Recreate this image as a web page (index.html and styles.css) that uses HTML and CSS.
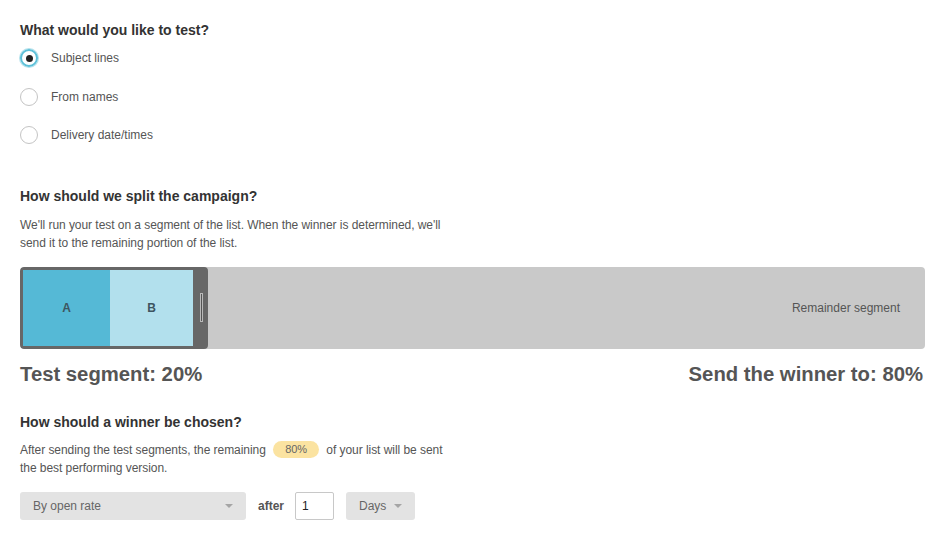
FILE: index.html
```html
<!DOCTYPE html>
<html lang="en">
<head>
<meta charset="UTF-8">
<meta name="viewport" content="width=device-width, initial-scale=1.0">
<title>A/B Test Settings</title>
<link rel="stylesheet" href="styles.css">
</head>
<body>
<div class="settings">
  <h3 class="title">What would you like to test?</h3>
  <div class="options">
    <label class="option"><span class="radio checked"></span>Subject lines</label>
    <label class="option"><span class="radio"></span>From names</label>
    <label class="option"><span class="radio"></span>Delivery date/times</label>
  </div>

  <h3 class="title split-title">How should we split the campaign?</h3>
  <p class="note">We'll run your test on a segment of the list. When the winner is determined, we'll send it to the remaining portion of the list.</p>

  <div class="split-bar">
    <div class="test-segment">
      <div class="seg seg-a">A</div>
      <div class="seg seg-b">B</div>
      <div class="handle"><span class="grip"></span></div>
    </div>
    <div class="remainder">Remainder segment</div>
  </div>

  <div class="summary">
    <span>Test segment: 20%</span>
    <span>Send the winner to: 80%</span>
  </div>

  <h3 class="title winner-title">How should a winner be chosen?</h3>
  <p class="note">After sending the test segments, the remaining <span class="pill">80%</span> of your list will be sent<br>the best performing version.</p>

  <div class="controls">
    <div class="select select-wide">By open rate<span class="caret"></span></div>
    <span class="after">after</span>
    <input class="num" type="text" value="1">
    <div class="select select-small">Days<span class="caret"></span></div>
  </div>
</div>
</body>
</html>
```
FILE: styles.css
```css
body {
  margin: 0;
  font-family: "Liberation Sans", Arial, sans-serif;
  color: #555;
  background: #fff;
}

.settings {
  padding: 21px 15px 0 20px;
}

.title {
  margin: 0;
  font-size: 14px;
  line-height: 18px;
  font-weight: bold;
  color: #333;
}

.options {
  display: flex;
  flex-direction: column;
}

.option {
  display: flex;
  align-items: center;
  height: 38.5px;
  font-size: 12px;
  color: #555;
}

.radio {
  width: 16px;
  height: 16px;
  border: 1px solid #c4c4c4;
  border-radius: 50%;
  margin-right: 13px;
  box-sizing: content-box;
  display: flex;
  align-items: center;
  justify-content: center;
}

.radio.checked {
  width: 14px;
  height: 14px;
  border: 2px solid #5cc0d8;
  box-shadow: 0 0 0 1px #b6e2ec;
}

.radio.checked::after {
  content: "";
  width: 7px;
  height: 7px;
  border-radius: 50%;
  background: #222;
}

.split-title {
  margin-top: 32px;
}

.note {
  margin: 11px 0 0;
  max-width: 432px;
  font-size: 12px;
  line-height: 18px;
  letter-spacing: -0.05px;
  color: #555;
}

.split-bar {
  display: flex;
  height: 82px;
  margin-top: 15px;
  background: #c9c9c9;
  border-radius: 4px;
  overflow: hidden;
}

.test-segment {
  display: flex;
  width: 182px;
  border: 3px solid #676767;
  border-radius: 4px;
  background: #676767;
}

.seg {
  display: flex;
  align-items: center;
  justify-content: center;
  font-size: 12px;
  font-weight: bold;
  color: #3d5560;
}

.seg-a {
  width: 87px;
  background: #55b9d6;
}

.seg-b {
  width: 83px;
  background: #b2e0ed;
}

.handle {
  flex: 1;
  display: flex;
  align-items: center;
  justify-content: flex-end;
  padding-right: 2px;
}

.grip {
  width: 1px;
  height: 27px;
  border: 1px solid #b9b9b9;
  background: #555;
}

.remainder {
  flex: 1;
  display: flex;
  align-items: center;
  justify-content: flex-end;
  padding-right: 25px;
  font-size: 12px;
  color: #555;
}

.summary {
  display: flex;
  justify-content: space-between;
  margin-top: 13px;
  padding-right: 2px;
  font-size: 20.3px;
  line-height: 24px;
  font-weight: bold;
  color: #555;
}

.winner-title {
  margin-top: 27px;
}

.winner-title + .note {
  margin-top: 10px;
}

.pill {
  display: inline-block;
  margin: 0 4px;
  padding: 0 12px;
  line-height: 17px;
  vertical-align: 1px;
  border-radius: 9px;
  background: #fbe3a1;
  font-size: 11px;
  color: #666;
}

.controls {
  display: flex;
  align-items: center;
  margin-top: 15px;
  font-size: 12px;
}

.select {
  display: flex;
  align-items: center;
  justify-content: space-between;
  height: 28px;
  box-sizing: border-box;
  padding: 0 13px;
  background: #e3e3e3;
  border-radius: 3px;
  color: #666;
}

.select-wide {
  width: 226px;
}

.select-small {
  width: 69px;
}

.caret {
  width: 0;
  height: 0;
  border-left: 4px solid transparent;
  border-right: 4px solid transparent;
  border-top: 4px solid #a5a5a5;
}

.after {
  margin: 0 11px 0 12px;
  font-weight: bold;
  color: #555;
}

.num {
  width: 39px;
  height: 28px;
  box-sizing: border-box;
  margin-right: 12px;
  padding: 0 6px;
  border: 1px solid #c8c8c8;
  border-radius: 2px;
  font-family: inherit;
  font-size: 12px;
  color: #222;
}
```
